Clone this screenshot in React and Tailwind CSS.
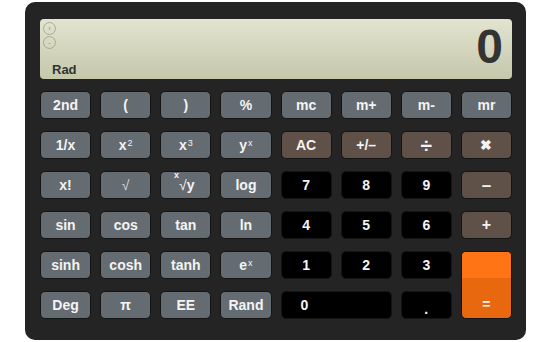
import React from "react";

const gray = "bg-[#646b71]";
const brown = "bg-[#5f5048]";
const black = "bg-black";

function Key({ children, tone = gray, className = "" }) {
  return (
    <button
      className={`${tone} ${className} h-full rounded-[5px] border border-[#141414] text-[14px] font-bold leading-none text-[#f4f4f4] flex items-center justify-center`}
    >
      {children}
    </button>
  );
}

const Sup = ({ children }) => (
  <sup className="text-[9px] font-normal relative -top-[2px] ml-[1px]">{children}</sup>
);

export default function App() {
  return (
    <div className="w-[552px] h-[342px] bg-white overflow-hidden font-['Liberation_Sans',Arial,sans-serif]">
      <div className="ml-[25px] mt-[2px] w-[501px] rounded-[10px] bg-[#242424] pt-[17px] pl-[15px] pr-[14px] pb-[21px]">
        {/* display */}
        <div className="relative h-[60px] rounded-[4px] bg-gradient-to-b from-[#e2e4cf] to-[#c5c8ab] flex items-end justify-between px-[9px]">
          <div className="flex flex-col gap-[1px] absolute left-[3px] top-[3px]">
            <span className="w-[13px] h-[13px] rounded-full border border-[#a9aa9c] text-[7px] leading-[11px] text-center text-[#888]">›</span>
            <span className="w-[13px] h-[13px] rounded-full border border-[#a9aa9c] text-[7px] leading-[11px] text-center text-[#888]">-</span>
          </div>
          <span className="mb-[0px] ml-[3px] text-[13px] font-bold text-[#333]">Rad</span>
          <span className="mb-[8px] text-[48px] leading-none font-bold text-[#333]">0</span>
        </div>

        {/* keys */}
        <div className="mt-[12px] grid grid-cols-8 grid-rows-[repeat(6,28px)] gap-x-[9px] gap-y-[12px]">
          <Key>2nd</Key>
          <Key>(</Key>
          <Key>)</Key>
          <Key>%</Key>
          <Key>mc</Key>
          <Key>m+</Key>
          <Key>m-</Key>
          <Key>mr</Key>

          <Key>1/x</Key>
          <Key>x<Sup>2</Sup></Key>
          <Key>x<Sup>3</Sup></Key>
          <Key>y<Sup>x</Sup></Key>
          <Key tone={brown}>AC</Key>
          <Key tone={brown}>+/–</Key>
          <Key tone={brown} className="text-[21px]">÷</Key>
          <Key tone={brown} className="text-[13px]">✖</Key>

          <Key>x!</Key>
          <Key><span className="font-normal text-[#d8dadc]">√</span></Key>
          <Key>
            <span className="relative pl-[2px]">
              <span className="absolute -top-[7px] -left-[3px] text-[9px]">x</span>
              <span className="font-normal">√</span>y
            </span>
          </Key>
          <Key>log</Key>
          <Key tone={black}>7</Key>
          <Key tone={black}>8</Key>
          <Key tone={black}>9</Key>
          <Key tone={brown} className="text-[17px]">–</Key>

          <Key>sin</Key>
          <Key>cos</Key>
          <Key>tan</Key>
          <Key>ln</Key>
          <Key tone={black}>4</Key>
          <Key tone={black}>5</Key>
          <Key tone={black}>6</Key>
          <Key tone={brown} className="text-[16px]">+</Key>

          <Key>sinh</Key>
          <Key>cosh</Key>
          <Key>tanh</Key>
          <Key>e<Sup>x</Sup></Key>
          <Key tone={black}>1</Key>
          <Key tone={black}>2</Key>
          <Key tone={black}>3</Key>
          <button className="row-span-2 rounded-[5px] border border-[#141414] bg-[#e8680f] flex flex-col overflow-hidden">
            <span className="h-[26px] w-full bg-[#ff7414]" />
            <span className="flex-1 flex items-center justify-center pt-[12px] text-[14px] font-bold text-[#f4f4f4]">=</span>
          </button>

          <Key>Deg</Key>
          <Key>π</Key>
          <Key>EE</Key>
          <Key>Rand</Key>
          <Key tone={black} className="col-span-2 !justify-start pl-[19px]">0</Key>
          <Key tone={black}><span className="mt-[8px]">.</span></Key>
        </div>
      </div>
    </div>
  );
}
